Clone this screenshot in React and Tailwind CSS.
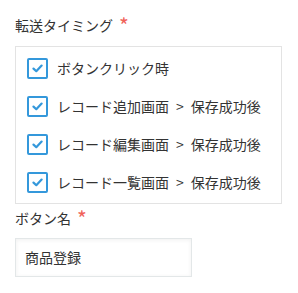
const items = [
  ["ボタンクリック時"],
  ["レコード追加画面", "保存成功後"],
  ["レコード編集画面", "保存成功後"],
  ["レコード一覧画面", "保存成功後"],
];

const CheckBox = () => (
  <span className="flex h-[21px] w-[21px] shrink-0 items-center justify-center rounded-[2px] border-2 border-[#3498db] bg-white">
    <svg width="11" height="9" viewBox="0 0 11 9" fill="none">
      <path d="M1.5 4.6 L4.3 7.2 L9.6 1.6" stroke="#3498db" strokeWidth="2.2" strokeLinecap="round" strokeLinejoin="round" />
    </svg>
  </span>
);

const Required = () => (
  <span className="ml-[6px] -mt-[1px] text-[21px] leading-[20px] text-[#f0625a]">*</span>
);

const App = () => {
  return (
    <div
      className="h-[293px] w-[298px] overflow-hidden bg-white pt-[15px] pl-[15px] text-[14px] text-[#333]"
      style={{ fontFamily: '"Noto Sans CJK JP", "Noto Sans", sans-serif' }}
    >
      {/* 転送タイミング */}
      <div className="flex h-[20px] items-center leading-[20px]">
        <span>転送タイミング</span>
        <Required />
      </div>

      <div className="mt-[11px] flex w-[267px] flex-col gap-[17px] border border-[#e3e3e3] pt-[11px] pb-[10px] pl-[11px]">
        {items.map(([a, b]) => (
          <label key={a + b} className="flex h-[21px] items-center gap-[9px]">
            <CheckBox />
            <span className="flex items-center leading-[21px]">
              {a}
              {b && <span className="mx-[7px]">&gt;</span>}
              {b}
            </span>
          </label>
        ))}
      </div>

      {/* ボタン名 */}
      <div className="mt-[4px] flex h-[20px] items-center leading-[20px]">
        <span>ボタン名</span>
        <Required />
      </div>

      <div className="mt-[10px] flex h-[39px] w-[177px] items-center border border-[#e3e7e8] bg-white pl-[9px] shadow-[inset_0_1px_4px_#f0f0f0]">
        商品登録
      </div>
    </div>
  );
};

export default App;
